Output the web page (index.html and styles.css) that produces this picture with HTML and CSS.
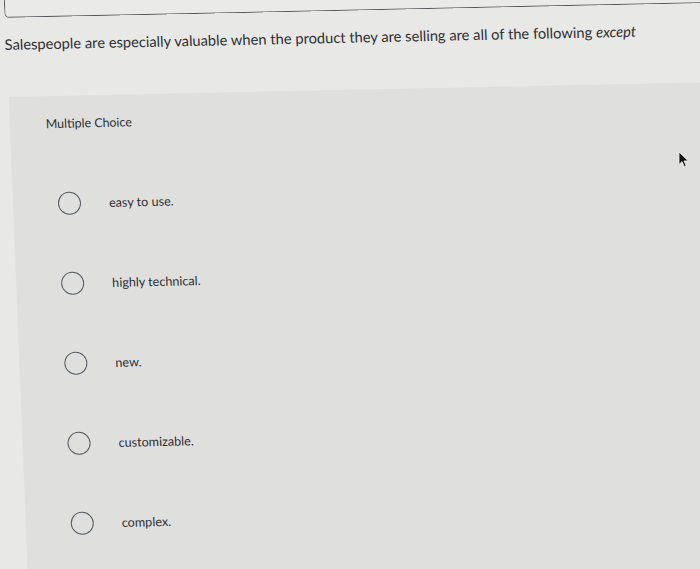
FILE: index.html
```html
<!DOCTYPE html>
<html lang="en">
<head>
<meta charset="utf-8">
<title>Multiple Choice</title>
<link rel="stylesheet" href="styles.css">
</head>
<body>
<div class="page">
  <div class="topbox"></div>
  <p class="question">Salespeople are especially valuable when the product they are selling are all of the following <em>except</em></p>
  <section class="panel">
    <div class="label">Multiple Choice</div>
    <ul class="options">
      <li class="option"><span class="radio"></span><span class="opt-text">easy to use.</span></li>
      <li class="option"><span class="radio"></span><span class="opt-text">highly technical.</span></li>
      <li class="option"><span class="radio"></span><span class="opt-text">new.</span></li>
      <li class="option"><span class="radio"></span><span class="opt-text">customizable.</span></li>
      <li class="option"><span class="radio"></span><span class="opt-text">complex.</span></li>
    </ul>
  </section>
</div>
<svg class="cursor" width="12" height="17" viewBox="0 0 12 17" aria-hidden="true">
  <path d="M1 1 L1 13.5 L4 10.6 L6.3 15.6 L8.2 14.8 L6 9.9 L10.2 9.9 Z" fill="#111" stroke="#f2f2f2" stroke-width="0.8" stroke-linejoin="round"/>
</svg>
</body>
</html>
```
FILE: styles.css
```css
html, body {
  margin: 0;
  padding: 0;
  background: #e8e8e6;
  height: 100%;
  overflow: hidden;
}

body {
  font-family: Lato, "Liberation Sans", Arial, sans-serif;
  color: #303133;
}

.page {
  width: 760px;
  padding-left: 2px;
  transform-origin: 0 0;
  transform: matrix(1, -0.021, 0.04, 1, 0, 0);
}

.topbox {
  height: 17px;
  margin-left: 1px;
  margin-top: -20px;
  padding-top: 20px;
  border: 1.5px solid #55585c;
  border-top: none;
  border-radius: 0 0 5px 5px;
  background: #eaeae8;
}

.question {
  margin: 16px 0 0;
  font-size: 14.7px;
  line-height: 20px;
  color: #2e3033;
}

.question em {
  font-style: italic;
}

.panel {
  margin-top: 43px;
  margin-left: 2px;
  background: #dfdfdd;
  padding: 20px 0 20px 36px;
  min-height: 480px;
}

.label {
  font-size: 12.4px;
  line-height: 16px;
  color: #2e3033;
}

.options {
  list-style: none;
  margin: 31px 0 0 9px;
  padding: 0;
}

.option {
  height: 80px;
  display: flex;
  align-items: center;
  gap: 28px;
}

.radio {
  width: 21px;
  height: 21px;
  border: 1.5px solid #575c63;
  border-radius: 50%;
  flex: none;
}

.opt-text {
  font-size: 12.6px;
  color: #2e3033;
}

.cursor {
  position: absolute;
  left: 678px;
  top: 151px;
}
```
